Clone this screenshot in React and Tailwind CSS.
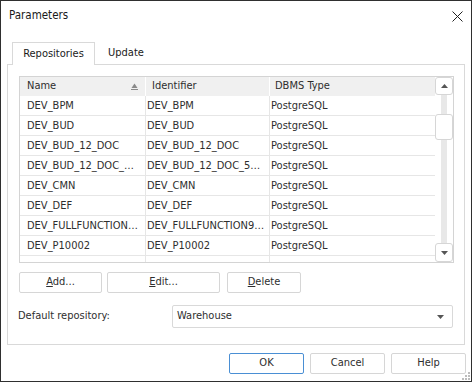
import React from 'react';

const ROWS = [
  ['DEV_BPM', 'DEV_BPM'],
  ['DEV_BUD', 'DEV_BUD'],
  ['DEV_BUD_12_DOC', 'DEV_BUD_12_DOC'],
  ['DEV_BUD_12_DOC_…', 'DEV_BUD_12_DOC_5…'],
  ['DEV_CMN', 'DEV_CMN'],
  ['DEV_DEF', 'DEV_DEF'],
  ['DEV_FULLFUNCTION…', 'DEV_FULLFUNCTION9…'],
  ['DEV_P10002', 'DEV_P10002'],
  ['', ''],
];

const FONT = "font-['DejaVu_Sans_Condensed','DejaVu_Sans',sans-serif]";

function Tri({ down }) {
  return (
    <svg width="7" height="4" viewBox="0 0 7 4">
      {down ? <polygon points="0,0 7,0 3.5,4" fill="#555" /> : <polygon points="0,4 7,4 3.5,0" fill="#555" />}
    </svg>
  );
}

function Btn({ children, w, focus }) {
  return (
    <button
      className={`${w} h-[21px] rounded-[2px] bg-white text-[11px] text-[#2e2e2e] flex items-center justify-center border ${
        focus ? 'border-[#4a8fd4]' : 'border-[#d6d6d6]'
      }`}
    >
      {children}
    </button>
  );
}

function Grid() {
  return (
    <div className="w-[435px] h-[187px] border border-[#d4d4d4] flex overflow-hidden">
      <div className="w-[415px] flex flex-col overflow-hidden">
        {/* header */}
        <div className="flex h-[19px] shrink-0 bg-[#f0f0f0]">
          <div className="w-[126px] border-r border-white pl-[7px] flex items-center justify-between pr-[7px]">
            <span>Name</span>
            <svg width="7" height="7" viewBox="0 0 7 7">
              <polygon points="0.5,5 6.5,5 3.5,0.5" fill="#8a8a8a" />
              <line x1="0" y1="6.5" x2="7" y2="6.5" stroke="#8a8a8a" />
            </svg>
          </div>
          <div className="w-[124px] border-r border-white pl-[6px] flex items-center">Identifier</div>
          <div className="w-[165px] pl-[5px] flex items-center">DBMS Type</div>
        </div>
        {ROWS.map((r, i) => (
          <div key={i} className="flex h-[20px] shrink-0 border-b border-[#e6e6e6]">
            <div className="w-[126px] border-r border-[#e6e6e6] pl-[7px] pt-[1px] flex items-center whitespace-nowrap">{r[0]}</div>
            <div className="w-[124px] border-r border-[#e6e6e6] pl-[1px] pt-[1px] flex items-center whitespace-nowrap">{r[1]}</div>
            <div className="w-[165px] pl-[1px] pt-[1px] flex items-center">{r[0] ? 'PostgreSQL' : ''}</div>
          </div>
        ))}
      </div>
      {/* scrollbar */}
      <div className="w-[18px] flex flex-col items-center">
        <div className="w-[18px] h-[18px] shrink-0 border border-[#d6d6d6] rounded-[3px] bg-white flex items-center justify-center">
          <Tri />
        </div>
        <div className="w-[6px] flex-1 bg-[#e8e8e8] flex flex-col items-center">
          <div className="w-[18px] h-[26px] mt-[19px] shrink-0 border border-[#d6d6d6] rounded-[3px] bg-white" />
        </div>
        <div className="w-[18px] h-[19px] shrink-0 border border-[#d6d6d6] rounded-[3px] bg-white flex items-center justify-center">
          <Tri down />
        </div>
      </div>
    </div>
  );
}

export default function App() {
  return (
    <div className={`${FONT} w-[472px] h-[382px] bg-white border border-[#2f2f2f] flex flex-col text-[11px] text-[#2e2e2e] relative`}>
      {/* title bar */}
      <div className="h-[30px] shrink-0 flex items-center justify-between pl-[8px] pr-[8px]">
        <span className="text-[11.5px] text-[#1a1a1a]">Parameters</span>
        <svg width="11" height="11" viewBox="0 0 11 11">
          <path d="M0.5 0.5 L10.5 10.5 M10.5 0.5 L0.5 10.5" stroke="#222" strokeWidth="1" />
        </svg>
      </div>

      {/* tabs */}
      <div className="mt-[11px] pl-[11px] flex items-end">
        <div className="relative z-10 -mb-px w-[83px] h-[23px] border border-b-0 border-[#d9d9d9] bg-white flex items-center justify-center text-[#1a1a1a]">
          Repositories
        </div>
        <div className="h-[22px] pl-[13px] flex items-center text-[#1a1a1a]">Update</div>
      </div>

      {/* panel */}
      <div className="ml-[6px] w-[458px] h-[281px] shrink-0 border border-[#d9d9d9] pl-[11px] pt-[11px] flex flex-col">
        <Grid />
        <div className="mt-[9px] flex">
          <Btn w="w-[83px]"><span><u>A</u>dd...</span></Btn>
          <div className="ml-[5px]"><Btn w="w-[113px]"><span><u>E</u>dit...</span></Btn></div>
          <div className="ml-[7px]"><Btn w="w-[74px]"><span><u>D</u>elete</span></Btn></div>
        </div>
        <div className="mt-[12px] flex items-center">
          <span className="w-[154px] shrink-0 -ml-px">Default repository:</span>
          <div className="w-[281px] shrink-0 h-[23px] border border-[#d9d9d9] rounded-[2px] flex items-center justify-between pl-[4px] pr-[8px]">
            <span>Warehouse</span>
            <Tri down />
          </div>
        </div>
      </div>

      {/* dialog buttons */}
      <div className="mt-[8px] flex justify-end pr-[5px] gap-[6px]">
        <Btn w="w-[75px]" focus>OK</Btn>
        <Btn w="w-[75px]">Cancel</Btn>
        <Btn w="w-[75px]">Help</Btn>
      </div>

      {/* resize grip */}
      <svg className="absolute right-[1px] bottom-[1px]" width="10" height="10" viewBox="0 0 10 10">
        {[[8, 2], [8, 5], [8, 8], [5, 5], [5, 8], [2, 8]].map(([x, y], i) => (
          <rect key={i} x={x} y={y} width="2" height="2" fill="#bdbdbd" />
        ))}
      </svg>
    </div>
  );
}
